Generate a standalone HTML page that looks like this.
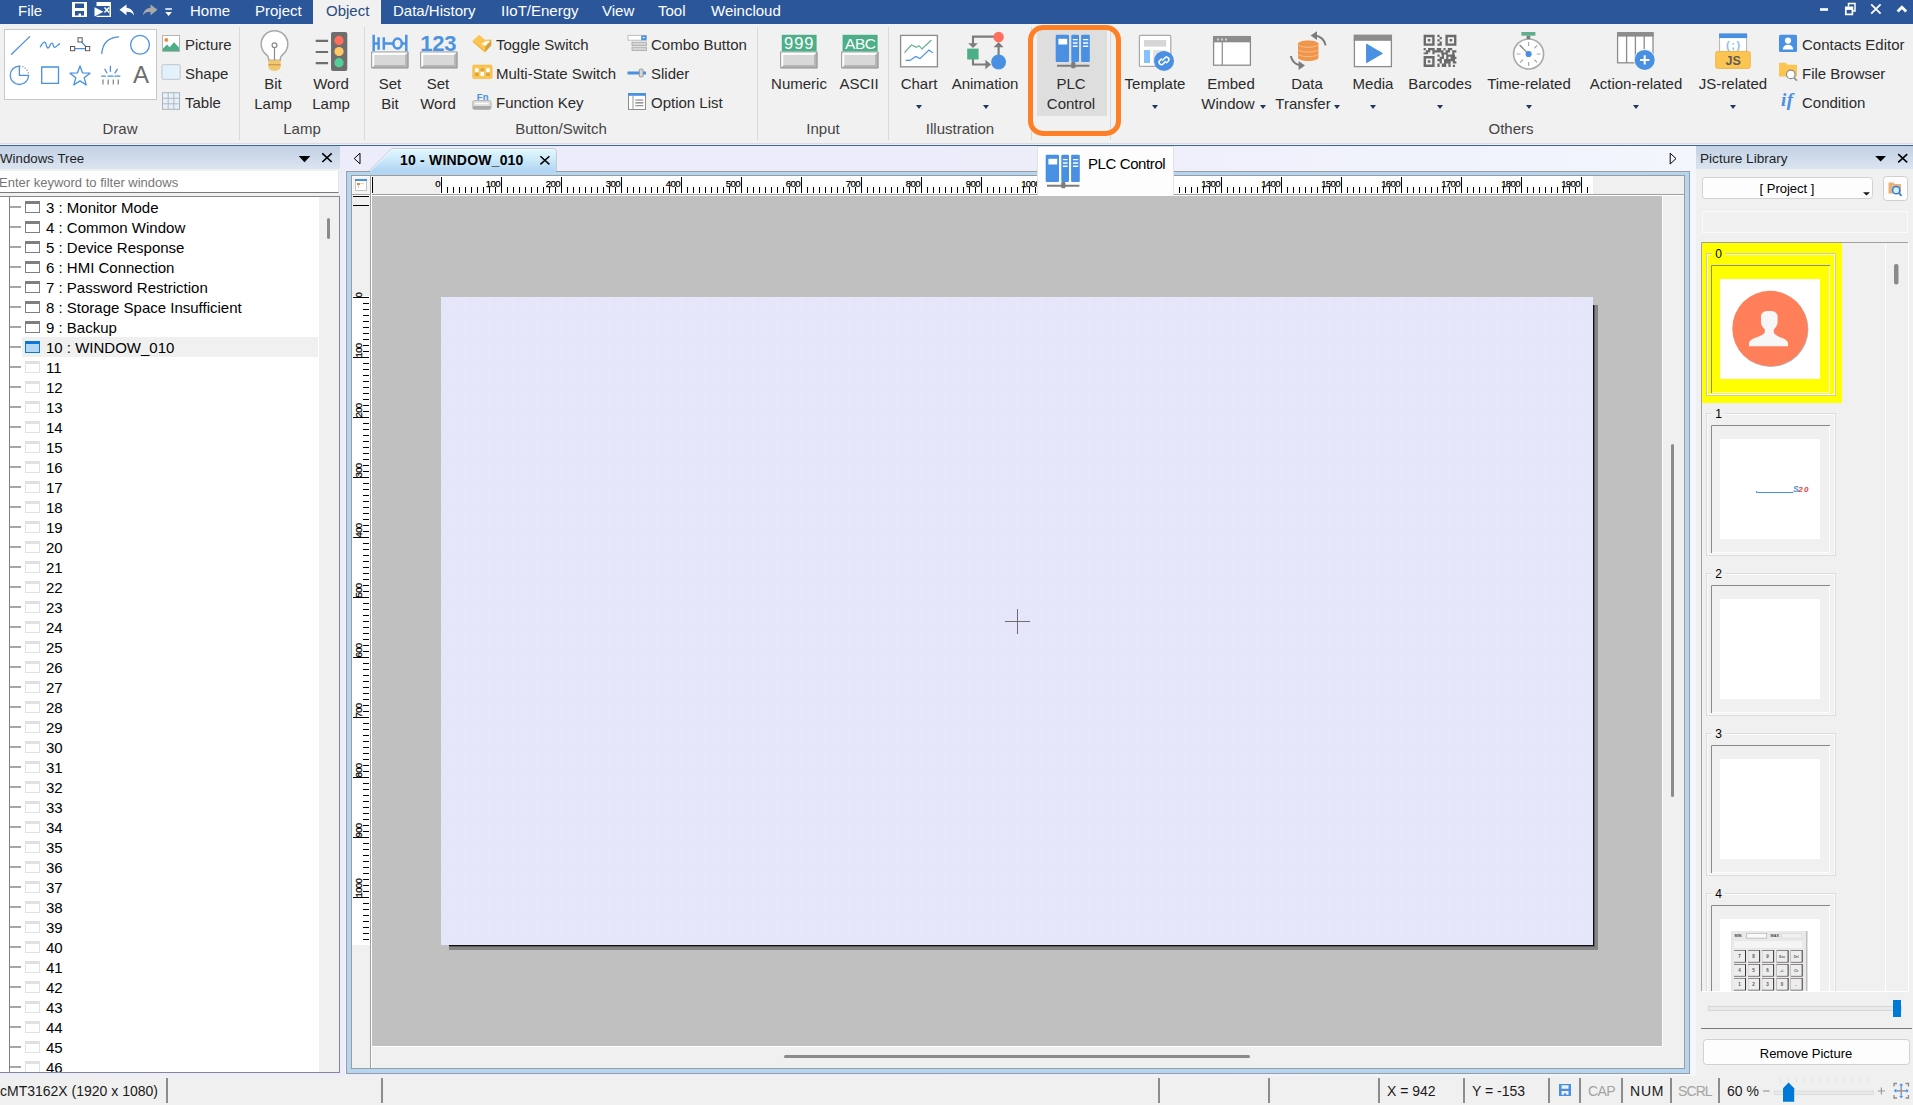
<!DOCTYPE html>
<html lang="en">
<head>
<meta charset="utf-8">
<title>EasyBuilder Pro</title>
<style>
html,body{margin:0;padding:0}
body{width:1913px;height:1105px;overflow:hidden;position:relative;background:#f0f0f0;font-family:"Liberation Sans",sans-serif;font-size:15px;color:#262626;line-height:1}
div,span,svg,i{box-sizing:border-box}
.a{position:absolute}
.t{position:absolute;white-space:pre;line-height:20px;height:20px}
/* menubar */
#menubar{left:0;top:0;width:1913px;height:24px;background:#2b579a}
#menubar .t{color:#fff;top:1px}
#objtab{left:313px;top:0;width:68px;height:24px;background:#f1f1f1}
/* ribbon */
#ribbon{left:0;top:24px;width:1913px;height:120px;background:#f1f1f1}
#ribbon .sep{position:absolute;top:3px;width:1px;height:113px;background:#d9d9d9}
#ribbon .gl{position:absolute;top:95px;height:20px;line-height:20px;color:#444;text-align:center;white-space:pre}
#ribbon .c{position:absolute;text-align:center;white-space:pre;line-height:20px;color:#2b2b2b}
#ribbon .s{position:absolute;white-space:pre;line-height:20px;height:20px;color:#2b2b2b}
.arr{position:absolute;width:0;height:0;border-left:3.5px solid transparent;border-right:3.5px solid transparent;border-top:4px solid #22375c}
#rline1{left:0;top:143px;width:1913px;height:1px;background:#dcdcdc}
#rline2{left:0;top:145px;width:1913px;height:1px;background:#3a64a4}
/* workspace */
#work{left:0;top:146px;width:1913px;height:930px;background:linear-gradient(to right,#ececfa 0,#ececfa 900px,#f3f6fd 1690px)}
.phead{position:absolute;top:0;height:23px;background:linear-gradient(#c1d0e4,#dbe5f1)}
.phead .t{top:3px;color:#1e1e1e}
.tl{position:absolute;left:10px;width:11px;height:2px;background:#a6a6a6}
.wi{position:absolute;left:25px;width:15px;height:12px;border:1px solid #7f7f7f;border-top:3px solid #7f7f7f;background:#fff}
.wa{border-color:#0a78d7;background:#b5d6f4}
.wf{border-color:#e1e1e1}
/* status bar */
#status{left:0;top:1076px;width:1913px;height:29px;background:#f0f0f0}
#status .t{top:5px;font-size:14px;color:#1a1a1a}
#status .vs{position:absolute;top:2px;width:2px;height:25px;background:#8c8c8c}
</style>
</head>
<body>
<!--MENUBAR-->
<div class="a" id="menubar">
<div class="a" id="objtab"></div>
<span class="t" style="left:18px">File</span>
<span class="t" style="left:190px">Home</span>
<span class="t" style="left:255px">Project</span>
<span class="t" style="left:326px;color:#2b4a7d">Object</span>
<span class="t" style="left:393px">Data/History</span>
<span class="t" style="left:501px">IIoT/Energy</span>
<span class="t" style="left:602px">View</span>
<span class="t" style="left:658px">Tool</span>
<span class="t" style="left:711px">Weincloud</span>
<svg class="a" style="left:70px;top:0" width="110" height="24" viewBox="70 0 110 24">
 <!-- save -->
 <path d="M72 2h15v15h-15z M75 3.5h9v4.5h-9z M75 11h9v4.5h-3v-2h-2.5v2h-3.5z" fill="#fff" fill-rule="evenodd"/>
 <!-- save/close -->
 <path d="M96.5 2h14.5v15h-14.5v-1.3h13v-9.7h-13z" fill="#fff"/>
 <path d="M94.5 7.2l9 4.6-9 4.8z" fill="#fff"/>
 <path d="M104.5 7.6l4.6 4.8M109.1 7.6l-4.6 4.8" stroke="#fff" stroke-width="1.5" fill="none"/>
 <!-- undo -->
 <path d="M119.5 9.8l7-5.4v3.3c4 .2 7 3 7.6 7.7-1.8-2.6-4-3.7-7.6-3.6v3.4z" fill="#fff"/>
 <!-- redo -->
 <path d="M157.5 9.8l-7-5.4v3.3c-4 .2-7 3-7.6 7.7 1.8-2.6 4-3.7 7.6-3.6v3.4z" fill="#a9a9a9"/>
 <!-- dropdown -->
 <path d="M165.3 8.3h6.6v1.5h-6.6z M165.3 12h6.6l-3.3 4z" fill="#fff"/>
</svg>
<svg class="a" style="left:1813px;top:0" width="100" height="24" viewBox="1813 0 100 24">
 <path d="M1820 8.2h8v2.6h-8z" fill="#fff"/>
 <path d="M1848.5 6.5v-3h6.5v7.5h-2.5" stroke="#fff" stroke-width="1.5" fill="none"/>
 <path d="M1845.8 7.3h6.6v7h-6.6z" stroke="#fff" stroke-width="1.7" fill="none"/>
 <path d="M1845.8 7.3h6.6v2.6h-6.6z" fill="#fff"/>
 <path d="M1871.2 4.3l9.4 9.4M1880.6 4.3l-9.4 9.4" stroke="#fff" stroke-width="1.8" fill="none"/>
 <path d="M1897.6 11.6l4.3-4.3 4.3 4.3" stroke="#fff" stroke-width="2.8" fill="none"/>
</svg>
</div>
<!--/MENUBAR-->
<!--RIBBON-->
<div class="a" id="ribbon">
<!-- draw gallery box -->
<div class="a" style="left:4px;top:5px;width:153px;height:71px;background:#fff;border:1px solid #c8c8c8"></div>
<span class="s" style="left:133px;top:39px;font-size:24px;line-height:24px;height:24px;color:#6e6e6e">A</span>
<!-- separators -->
<div class="sep" style="left:239px"></div>
<div class="sep" style="left:364px"></div>
<div class="sep" style="left:757px"></div>
<div class="sep" style="left:888px"></div>
<div class="sep" style="left:1031px"></div>
<div class="sep" style="left:1110px"></div>
<!-- PLC highlight -->
<div class="a" style="left:1037px;top:3px;width:70px;height:89px;background:#dedede"></div>
<!-- small items: Draw -->
<span class="s" style="left:185px;top:11px">Picture</span>
<span class="s" style="left:185px;top:40px">Shape</span>
<span class="s" style="left:185px;top:69px">Table</span>
<!-- large items -->
<div class="c" style="left:223px;top:50px;width:100px">Bit
Lamp</div>
<div class="c" style="left:281px;top:50px;width:100px">Word
Lamp</div>
<div class="c" style="left:340px;top:50px;width:100px">Set
Bit</div>
<div class="c" style="left:388px;top:50px;width:100px">Set
Word</div>
<span class="s" style="left:496px;top:11px">Toggle Switch</span>
<span class="s" style="left:496px;top:40px">Multi-State Switch</span>
<span class="s" style="left:496px;top:69px">Function Key</span>
<span class="s" style="left:651px;top:11px">Combo Button</span>
<span class="s" style="left:651px;top:40px">Slider</span>
<span class="s" style="left:651px;top:69px">Option List</span>
<div class="c" style="left:749px;top:50px;width:100px">Numeric</div>
<div class="c" style="left:809px;top:50px;width:100px">ASCII</div>
<div class="c" style="left:869px;top:50px;width:100px">Chart</div>
<div class="c" style="left:935px;top:50px;width:100px">Animation</div>
<div class="c" style="left:1021px;top:50px;width:100px">PLC
Control</div>
<div class="c" style="left:1105px;top:50px;width:100px">Template</div>
<div class="c" style="left:1181px;top:50px;width:100px">Embed</div>
<div class="c" style="left:1178px;top:70px;width:100px">Window</div>
<div class="c" style="left:1257px;top:50px;width:100px">Data</div>
<div class="c" style="left:1253px;top:70px;width:100px">Transfer</div>
<div class="c" style="left:1323px;top:50px;width:100px">Media</div>
<div class="c" style="left:1390px;top:50px;width:100px">Barcodes</div>
<div class="c" style="left:1479px;top:50px;width:100px">Time-related</div>
<div class="c" style="left:1586px;top:50px;width:100px">Action-related</div>
<div class="c" style="left:1683px;top:50px;width:100px">JS-related</div>
<span class="s" style="left:1802px;top:11px">Contacts Editor</span>
<span class="s" style="left:1802px;top:40px">File Browser</span>
<span class="s" style="left:1802px;top:69px">Condition</span>
<span class="s" style="left:1781px;top:64px;font:italic 700 19px/24px 'Liberation Serif',serif;height:24px;color:#4a90e2;letter-spacing:.5px">if</span>
<!-- dropdown arrows -->
<i class="arr" style="left:916px;top:81px"></i>
<i class="arr" style="left:983px;top:81px"></i>
<i class="arr" style="left:1152px;top:81px"></i>
<i class="arr" style="left:1260px;top:81px"></i>
<i class="arr" style="left:1334px;top:81px"></i>
<i class="arr" style="left:1370px;top:81px"></i>
<i class="arr" style="left:1437px;top:81px"></i>
<i class="arr" style="left:1526px;top:81px"></i>
<i class="arr" style="left:1633px;top:81px"></i>
<i class="arr" style="left:1730px;top:81px"></i>
<!-- group labels -->
<div class="gl" style="left:70px;width:100px">Draw</div>
<div class="gl" style="left:252px;width:100px">Lamp</div>
<div class="gl" style="left:511px;width:100px">Button/Switch</div>
<div class="gl" style="left:773px;width:100px">Input</div>
<div class="gl" style="left:910px;width:100px">Illustration</div>
<div class="gl" style="left:1461px;width:100px">Others</div>
<svg class="a" style="left:0;top:0" width="1913" height="120" viewBox="0 24 1913 120" fill="none" font-family="Liberation Sans, sans-serif">
<g stroke="#4a90e2" stroke-width="1.3" stroke-linecap="round" stroke-linejoin="round">
 <path d="M11.5 54.3L29.7 36.6"/>
 <path d="M40.3 46.8C42 44 43.6 41.6 45 42.3 46.6 43 46 48 48 48 50 48 50 42.8 52 43.2 53.6 43.5 53 47.5 54.8 47.3 56.5 47 58 44.5 59.5 43.8"/>
 <path d="M72.5 48.7H87.5M80 40L87.5 48.7"/>
 <path d="M101.8 53.5C102.5 44 108 37.5 118.6 36.8"/>
 <circle cx="140" cy="44.8" r="9.4"/>
 <path d="M19.4 66.1A9.2 9.2 0 1 0 28.6 75.3H19.4Z"/>
 <rect x="41.7" y="67" width="16.8" height="16.4"/>
 <path d="M80 65.9L82.6 72.9 90 73.2 84.2 77.8 86.2 85 80 80.9 73.8 85 75.8 77.8 70 73.2 77.4 72.9Z"/>
 <path d="M110.4 66.5V71.3M104.8 69.3L106.8 72.8M117.3 69.3L115 72.8M101.8 76.2H105.4M108 76.2H113M115 76.2H119.8"/>
</g>
<path d="M19.4 66.1A9.2 9.2 0 0 1 28.6 75.3" stroke="#8a8a8a" stroke-width="1.2" stroke-dasharray="1.2 1.6"/>
<g fill="#fff" stroke="#5a5a5a" stroke-width="1"><rect x="70.5" y="46.5" width="4.2" height="4.2"/><rect x="78" y="37.8" width="4.2" height="4.2"/><rect x="85.5" y="46.5" width="4.2" height="4.2"/></g>
<path d="M103 79.5V84.6M108.2 79.5V84.6M113.3 79.5V84.6M118.3 79.5V84.6" stroke="#8a8a8a" stroke-width="1.3"/>
<!-- picture / shape / table -->
<rect x="162.5" y="35.5" width="17" height="16" fill="#fff" stroke="#b4b4b4"/>
<path d="M163 51V48.6L167 44.6 169.6 47.2 174 42.2 179 47.6V51Z" fill="#4caf87"/>
<circle cx="166.3" cy="39.9" r="1.9" fill="#f0883a"/>
<rect x="162" y="64.7" width="18.2" height="14.6" rx="1" fill="#e3f1fd" stroke="#c0c6cc"/>
<rect x="162.5" y="92.7" width="17" height="16.6" fill="#e3f1fd" stroke="#b2b2b2"/>
<path d="M168.2 93V109M173.8 93V109M163 98.3H179M163 103.8H179" stroke="#b2b2b2" stroke-width=".9"/>
<!-- bit lamp -->
<path d="M268.600 60.300V58.500C268.600 56 266.800 55 265 53.400A13.300 13.300 0 1 1 284 53.400C282.200 55 280.400 56 280.400 58.500V60.300Z" fill="#fff" stroke="#a8a8a8" stroke-width="1.500"/>
<circle cx="274.5" cy="45.3" r="2.4" stroke="#8a8a8a" stroke-width="1.2"/>
<path d="M274.5 47.8V60" stroke="#8a8a8a" stroke-width="1.2"/>
<path d="M268.3 60.3H280.7V66.2C280.7 68.8 278 70.9 274.5 70.9S268.3 68.8 268.3 66.2Z" fill="#f2c76e"/>
<path d="M268.300 64.800H280.700" stroke="#b98f3f" stroke-width="1"/>
<!-- word lamp -->
<rect x="331" y="32" width="16.3" height="39" rx="2" fill="#6e6e6e"/>
<circle cx="339" cy="40.4" r="4.6" fill="#ff6f5b"/><circle cx="339" cy="51.5" r="4.6" fill="#ffc864"/><circle cx="339" cy="62.7" r="4.6" fill="#52cf9b"/>
<path d="M315.7 40.9H328.1M315.7 52H328.1M315.7 63.1H328.1" stroke="#6e6e6e" stroke-width="2.2"/>
<!-- set bit -->
<g id="btn3d"><rect x="0" y="0" width="37.400" height="17.100" rx=".800" fill="#8f8f8f"/><rect x="1" y="1" width="35.400" height="15.100" fill="#b4b4b4"/><path d="M1 1H36.400L33.900 3.500H3.500V13.600L1 16.100Z" fill="#fdfdfd"/><rect x="3.500" y="3.500" width="30.400" height="10.100" fill="#d8d8d8"/></g>
<use href="#btn3d" x="371.2" y="51.4"/>
<g stroke="#4a93e2" stroke-width="2.500"><path d="M373.700 34.800V51.200M378.600 37.300V49.700M373.700 43.400H378.600M383.800 37.300V49.700M383.800 43.400H393.400M402 43.400H406.300M406.300 34.800V51.200" stroke-width="2.500"/><ellipse cx="397.600" cy="43.500" rx="4.200" ry="5"/></g>
<!-- set word -->
<use href="#btn3d" x="420.2" y="51.4"/>
<text x="420.300" y="50.800" font-size="22" font-weight="700" fill="#4a93e2" letter-spacing="-.300">123</text>
<!-- toggle switch -->
<path d="M472.900 40.600L479.200 34.700 484.900 39.700 491.200 39.500V45.600L484.700 52.400 472.900 42.200Z" fill="#fcc450"/>
<path d="M485.600 46.200L491.200 39.600V45.600L484.700 52.400Z" fill="#d7a03f"/>
<path d="M472.900 41.400L484.700 51.300" stroke="#e6ae42" stroke-width=".800"/>
<path d="M481.200 44L486 40.900 490.300 41.200 485.300 45.900Z" fill="#fffbea"/>
<!-- multi-state -->
<rect x="472.700" y="65.100" width="19.400" height="13.500" rx="1.300" fill="#fcc450" stroke="#f2b93f" stroke-width=".600"/>
<path d="M475 68.200h3.500v4.300h-3.500zM486.200 68.200h3.600v4.300h-3.600zM480.500 71.400h3.600v4.500h-3.600z" fill="#fff"/>
<path d="M475 72.500h3.500v3.400h-3.500zM486.200 72.500h3.600v3.400h-3.600zM480.500 68.200h3.600v3.200h-3.600z" fill="#d9a441"/>
<!-- function key -->
<text x="476.800" y="99.700" font-size="9.600" font-weight="700" fill="#4a90e2">Fn</text>
<rect x="472.800" y="100.600" width="18.200" height="8.800" rx="1.600" fill="#dedede" stroke="#a4a4a4" stroke-width=".800"/>
<path d="M473.200 106h17.400v2.200c0 .5-.4.900-.9.900h-15.600c-.5 0-.9-.4-.9-.9z" fill="#a9a9a9"/>
<rect x="475" y="102.900" width="13.400" height="1.300" fill="#fff"/>
<!-- combo button -->
<rect x="628" y="35.4" width="18.4" height="4.8" fill="#fff" stroke="#b8b8b8" stroke-width=".9"/>
<rect x="641.2" y="35.4" width="5.2" height="4.8" fill="#4a90e2"/>
<path d="M642.4 37l1.4 1.6 1.4-1.6z" fill="#fff"/>
<rect x="632" y="42.2" width="14.4" height="3.4" fill="#d4d4d4" stroke="#a9a9a9" stroke-width=".8"/>
<rect x="632" y="47.2" width="14.4" height="3.4" fill="#d4d4d4" stroke="#a9a9a9" stroke-width=".8"/>
<!-- slider -->
<path d="M627.5 73H646" stroke="#4a90e2" stroke-width="3"/>
<rect x="639.3" y="69.2" width="3.8" height="7.6" rx=".8" fill="#d8d8d8" stroke="#8f8f8f" stroke-width=".9"/>
<!-- option list -->
<rect x="628.5" y="93.5" width="17" height="16" fill="#fff" stroke="#8c8c8c"/>
<rect x="628" y="93" width="18" height="2.8" fill="#4a90e2"/>
<path d="M633 96V109.5" stroke="#8c8c8c" stroke-width=".9"/>
<path d="M635.3 100H643.3M635.3 102.9H643.3M635.3 105.8H643.3" stroke="#7a7a7a" stroke-width="1.1"/>
<!-- numeric -->
<use href="#btn3d" x="780.2" y="51.4"/>
<rect x="781.8" y="34.8" width="34.8" height="16.6" fill="#4caf87"/>
<text x="799.2" y="49.4" font-size="16.5" fill="#fff" text-anchor="middle" letter-spacing=".9">999</text>
<!-- ascii -->
<use href="#btn3d" x="841.2" y="51.4"/>
<rect x="842.6" y="34.8" width="35" height="16.6" fill="#4caf87"/>
<text x="860.3" y="48.7" font-size="15.5" fill="#fff" text-anchor="middle" letter-spacing="-.4">ABC</text>
<!-- chart -->
<rect x="900.6" y="35.4" width="36.8" height="31.4" fill="#fff" stroke="#8c8c8c" stroke-width="1.3"/>
<path d="M904.5 52.6L911.4 45 916.4 47.4 918.9 45.7 922 49 931.4 40" stroke="#5faf8f" stroke-width="1.2"/>
<path d="M905.7 60.4H910L915.8 56.4 920 58.6 929 50 932.7 52.9" stroke="#4a90e2" stroke-width="1.2"/>
<!-- animation -->
<g stroke="#7c7c7c" stroke-width="2.1"><path d="M994 36.6H973V44M973 59V64.5H986M998.6 55V46.5"/></g>
<path d="M968.2 43.2H977.8L973 48zM985.4 59.8V69.2L991 64.5zM993.6 47.2H1003.6L998.6 42z" fill="#7c7c7c"/>
<rect x="967.2" y="48.6" width="11.4" height="10.9" fill="#4caf87"/>
<circle cx="998.6" cy="37" r="5.2" fill="#ff6f5b"/><circle cx="998.6" cy="62" r="7.5" fill="#4a90e2"/>
<!-- PLC -->
<g fill="#4a90e2"><rect x="1055.7" y="34.8" width="13.3" height="27.2" rx="1.2"/><rect x="1071.3" y="34.8" width="7.7" height="27.2" rx="1.2"/><rect x="1081.1" y="34.8" width="8.7" height="27.2" rx="1.2"/></g>
<rect x="1058.4" y="38.8" width="8.8" height="5.7" fill="#fff"/>
<path d="M1072.9 39.6H1077.6M1072.9 43H1077.6M1072.9 46.2H1077.6M1083 39.6H1088.2M1083 43H1088.2M1083 46.2H1088.2" stroke="#fff" stroke-width="1.4"/>
<path d="M1057 65.8H1089.4" stroke="#7c7c7c" stroke-width="2"/><rect x="1071.2" y="62" width="4.2" height="6.2" rx="1" fill="#7c7c7c"/>
<!-- template -->
<rect x="1139.4" y="35.4" width="31.4" height="31" rx="1" fill="#fff" stroke="#a9a9a9" stroke-width="1.2"/>
<rect x="1144" y="40" width="22.2" height="6.6" fill="#d6d6d6"/>
<rect x="1144" y="50" width="6" height="13" fill="#85c1ff"/>
<rect x="1153" y="50" width="13" height="13" fill="#e2e2e2"/>
<circle cx="1164" cy="60.9" r="10" fill="#4a90e2"/>
<g stroke="#fff" stroke-width="1.5" stroke-linecap="round"><path d="M1162.6 60.2l2.3-2.3a2.3 2.3 0 0 1 3.3 3.3l-1.6 1.6M1165.4 61.6l-2.3 2.3a2.3 2.3 0 0 1-3.3-3.3l1.6-1.6"/></g>
<!-- embed window -->
<rect x="1213.6" y="36.6" width="36.8" height="28.6" fill="#fff" stroke="#8c8c8c" stroke-width="1.3"/>
<rect x="1213" y="36" width="38" height="6.3" fill="#8c8c8c"/>
<path d="M1217 38.4h2v2h-2zM1221 38.4h2v2h-2zM1225 38.4h2v2h-2z" fill="#d0d0d0"/>
<path d="M1222.3 42V65" stroke="#8c8c8c" stroke-width="1.2"/>
<!-- data transfer -->
<path d="M1298 43.6V57.8C1298 59.6 1302.5 61 1308.2 61S1318.4 59.6 1318.4 57.8V43.6C1318.4 41.8 1313.9 40.4 1308.2 40.4S1298 41.8 1298 43.6Z" fill="#f0964a"/>
<path d="M1298 44.2C1298 46 1302.5 47.2 1308.2 47.2S1318.4 46 1318.4 44.2M1298 49C1298 50.8 1302.5 52 1308.2 52S1318.4 50.8 1318.4 49M1298 53.6C1298 55.4 1302.5 56.6 1308.2 56.6S1318.4 55.4 1318.4 53.6" stroke="#f7c29a" stroke-width=".9"/>
<path d="M1315 35.6C1320.5 36.5 1324.5 40 1325.6 45.4M1290.8 56C1292 61.2 1295.6 64.6 1300.6 65.6" stroke="#7c7c7c" stroke-width="2"/>
<path d="M1317 31.2V40L1310.6 35.6zM1298.6 61V70L1305 65.6z" fill="#7c7c7c"/>
<!-- media -->
<rect x="1354.4" y="35.4" width="37" height="31.2" fill="#fff" stroke="#8c8c8c" stroke-width="1.3"/>
<rect x="1353.8" y="34.8" width="38.2" height="6" fill="#8c8c8c"/>
<path d="M1366.6 44.2V62.6L1382.4 53.4Z" fill="#4a90e2" stroke="#4a90e2" stroke-width="1" stroke-linejoin="round"/>
<!-- barcodes -->
<g fill="#6a6a6a">
<path d="M1423.6 34.8h11v11h-11zM1426 37.2v6.2h6.2v-6.2zM1427.8 39h2.6v2.6h-2.6z" fill-rule="evenodd"/>
<path d="M1445.4 34.8h11v11h-11zM1447.8 37.2v6.2h6.2v-6.2zM1449.6 39h2.6v2.6h-2.6z" fill-rule="evenodd"/>
<path d="M1423.6 56h11v11h-11zM1426 58.400v6.2h6.2v-6.2zM1427.8 60.2h2.6v2.6h-2.6z" fill-rule="evenodd"/>
<path d="M1437.400 34.800h2.200v2.200h-2.200zM1439.600 37.000h2.200v2.200h-2.200zM1437.400 39.200h2.200v2.200h-2.200zM1439.600 41.400h2.200v2.200h-2.200zM1437.400 43.600h4.400v2.200h-4.400zM1423.600 48.000h2.200v2.200h-2.200zM1428.000 48.000h6.600v2.200h-6.600zM1425.800 50.200h4.400v2.200h-4.400zM1432.400 50.200h11.000v2.200h-11.000zM1436.800 48.000h4.400v2.200h-4.400zM1443.400 48.000h2.200v2.200h-2.200zM1447.800 48.000h4.400v2.200h-4.400zM1445.600 50.200h4.400v2.200h-4.400zM1452.200 50.200h4.200v2.200h-4.200zM1423.600 52.400h4.400v1.800h-4.400zM1432.400 52.400h2.200v1.800h-2.200zM1441.200 52.400h6.600v2.200h-6.600zM1452.200 52.400h2.200v2.200h-2.200zM1437.400 54.600h2.200v2.200h-2.200zM1441.800 54.600h2.200v2.200h-2.200zM1446.200 54.600h8.800v2.200h-8.800zM1439.600 56.800h4.400v2.200h-4.400zM1446.200 56.800h2.200v2.200h-2.200zM1450.600 56.800h5.800v2.200h-5.800zM1437.400 59.000h4.400v2.200h-4.400zM1444.000 59.000h11.000v2.200h-11.000zM1439.600 61.200h2.200v2.200h-2.200zM1444.000 61.200h6.600v2.200h-6.600zM1452.800 61.200h3.600v2.200h-3.600zM1437.400 63.400h2.200v3.600h-2.200zM1441.800 63.400h4.400v3.600h-4.400zM1448.400 63.400h2.200v3.600h-2.200zM1452.800 64.800h2.200v2.200h-2.200z"/>
</g>
<!-- time-related -->
<circle cx="1528.6" cy="54" r="15" fill="#fff" stroke="#a9a9a9" stroke-width="1.6"/>
<rect x="1521.4" y="32" width="14" height="3.7" fill="#5faf8f"/>
<rect x="1526.6" y="35.7" width="3.6" height="3.4" fill="#7c7c7c"/>
<g stroke="#a9a9a9" stroke-width="1.2"><path d="M1528.6 42V46M1528.600 62V66M1516.600 54H1520.600M1536.600 54H1540.600M1520.1 45.500L1522.900 48.300M1537.100 45.500L1534.300 48.300M1520.100 62.500L1522.900 59.700M1537.100 62.500L1534.300 59.700"/></g>
<path d="M1528.6 54L1519.600 45" stroke="#8c8c8c" stroke-width="1.3"/>
<circle cx="1528.6" cy="54" r="3.1" fill="#4a90e2"/>
<!-- action-related -->
<rect x="1617.600" y="32.800" width="35.400" height="30" fill="#fff" stroke="#8c8c8c" stroke-width="1.3"/>
<rect x="1617" y="32.200" width="36.600" height="4.400" fill="#8c8c8c"/>
<path d="M1626.600 36V63M1635.400 36V63M1644.200 36V50" stroke="#8c8c8c" stroke-width="1.300"/>
<circle cx="1644.700" cy="59.900" r="10.800" fill="#f1f1f1"/>
<circle cx="1644.700" cy="59.900" r="10" fill="#4a90e2"/>
<path d="M1644.700 55.200V64.600M1640 59.900H1649.400" stroke="#fff" stroke-width="2"/>
<!-- JS-related -->
<rect x="1719.600" y="34" width="27" height="18" fill="#fff" stroke="#b4b4b4" stroke-width="1"/>
<rect x="1719.100" y="33.500" width="28" height="4.600" fill="#4a90e2"/>
<text x="1734" y="49.200" font-size="11" font-weight="700" fill="#8dbdf0" text-anchor="middle" letter-spacing="1.6">(;)</text>
<rect x="1715.600" y="51.400" width="34.700" height="17" rx="2" fill="#fcc450" stroke="#e8b040" stroke-width=".8"/>
<text x="1733.2" y="64.600" font-size="12.500" font-weight="700" fill="#5c5c5c" text-anchor="middle">JS</text>
<!-- contacts editor -->
<rect x="1779" y="34.800" width="18" height="17.200" rx="1.500" fill="#4a90e2"/>
<circle cx="1788" cy="40.600" r="3.100" fill="#fff"/>
<path d="M1782.800 49.600C1782.800 46.400 1785 44.800 1788 44.800S1793.200 46.400 1793.200 49.600Z" fill="#fff"/>
<!-- file browser -->
<path d="M1779 63.800C1779 63.200 1779.400 62.800 1780 62.800H1785.600L1787.400 64.800H1796C1796.600 64.800 1797 65.200 1797 65.800V76.600H1779Z" fill="#fcc450"/>
<circle cx="1790.800" cy="74.400" r="4.300" fill="#fff" stroke="#8c8c8c" stroke-width="1.200"/>
<path d="M1793.900 77.600L1797 80.600" stroke="#8c8c8c" stroke-width="1.600"/>

</svg>

<!-- orange highlight -->
<div class="a" style="left:1028px;top:1px;width:93px;height:111px;border:5px solid #ff7f27;border-radius:15px"></div>
</div>
<!--/RIBBON-->
<div class="a" id="rline1"></div><div class="a" id="rline2"></div>
<div class="a" id="work">
<!--LEFT-->
<div class="a" id="left" style="left:0;top:0;width:340px;height:930px">
<div class="phead" style="left:0;width:340px"><span class="t" style="left:0;font-size:13.300px">Windows Tree</span>
<svg class="a" style="left:296px;top:5px" width="40" height="14" viewBox="296 151 40 14"><path d="M298.7 156h11.6l-5.800 6.200z" fill="#000"/><path d="M322.300 153.300l9.400 8.700M331.700 153.300l-9.400 8.700" stroke="#000" stroke-width="1.600"/></svg></div>
<div class="a" style="left:0;top:23px;width:340px;height:27px;background:#f0f0f0"></div>
<div class="a" style="left:0;top:25px;width:339px;height:22px;background:#fff;border-bottom:1px solid #7a7a7a;border-right:1px solid #e3e3e3"></div>
<span class="t" style="left:-1px;top:27px;font-size:13px;color:#767676">Enter keyword to filter windows</span>
<div class="a" id="tree" style="left:0;top:50px;width:340px;height:877px;background:#fff;border-top:1px solid #828790;border-right:1px solid #828790;border-bottom:1px solid #828790;overflow:hidden">
<div class="a" style="left:319px;top:0;width:20px;height:875px;background:#f0f0f0"></div>
<div class="a" style="left:327px;top:21px;width:3px;height:21px;background:#8b8b8b;border-radius:1.5px"></div>
<div class="a" style="left:9px;top:0;width:1px;height:875px;background:#808080"></div>
<div class="a" style="left:22px;top:140px;width:296px;height:20px;background:#f0f0f0"></div>
<i class="tl" style="top:9px"></i>
<i class="wi" style="top:4px"></i>
<span class="t" style="left:46px;top:1px;color:#000">3 : Monitor Mode</span>
<i class="tl" style="top:29px"></i>
<i class="wi" style="top:24px"></i>
<span class="t" style="left:46px;top:21px;color:#000">4 : Common Window</span>
<i class="tl" style="top:49px"></i>
<i class="wi" style="top:44px"></i>
<span class="t" style="left:46px;top:41px;color:#000">5 : Device Response</span>
<i class="tl" style="top:69px"></i>
<i class="wi" style="top:64px"></i>
<span class="t" style="left:46px;top:61px;color:#000">6 : HMI Connection</span>
<i class="tl" style="top:89px"></i>
<i class="wi" style="top:84px"></i>
<span class="t" style="left:46px;top:81px;color:#000">7 : Password Restriction</span>
<i class="tl" style="top:109px"></i>
<i class="wi" style="top:104px"></i>
<span class="t" style="left:46px;top:101px;color:#000">8 : Storage Space Insufficient</span>
<i class="tl" style="top:129px"></i>
<i class="wi" style="top:124px"></i>
<span class="t" style="left:46px;top:121px;color:#000">9 : Backup</span>
<i class="tl" style="top:149px"></i>
<i class="wi wa" style="top:144px"></i>
<span class="t" style="left:46px;top:141px;color:#000">10 : WINDOW_010</span>
<i class="tl" style="top:169px"></i>
<i class="wi wf" style="top:164px"></i>
<span class="t" style="left:46px;top:161px;color:#000">11</span>
<i class="tl" style="top:189px"></i>
<i class="wi wf" style="top:184px"></i>
<span class="t" style="left:46px;top:181px;color:#000">12</span>
<i class="tl" style="top:209px"></i>
<i class="wi wf" style="top:204px"></i>
<span class="t" style="left:46px;top:201px;color:#000">13</span>
<i class="tl" style="top:229px"></i>
<i class="wi wf" style="top:224px"></i>
<span class="t" style="left:46px;top:221px;color:#000">14</span>
<i class="tl" style="top:249px"></i>
<i class="wi wf" style="top:244px"></i>
<span class="t" style="left:46px;top:241px;color:#000">15</span>
<i class="tl" style="top:269px"></i>
<i class="wi wf" style="top:264px"></i>
<span class="t" style="left:46px;top:261px;color:#000">16</span>
<i class="tl" style="top:289px"></i>
<i class="wi wf" style="top:284px"></i>
<span class="t" style="left:46px;top:281px;color:#000">17</span>
<i class="tl" style="top:309px"></i>
<i class="wi wf" style="top:304px"></i>
<span class="t" style="left:46px;top:301px;color:#000">18</span>
<i class="tl" style="top:329px"></i>
<i class="wi wf" style="top:324px"></i>
<span class="t" style="left:46px;top:321px;color:#000">19</span>
<i class="tl" style="top:349px"></i>
<i class="wi wf" style="top:344px"></i>
<span class="t" style="left:46px;top:341px;color:#000">20</span>
<i class="tl" style="top:369px"></i>
<i class="wi wf" style="top:364px"></i>
<span class="t" style="left:46px;top:361px;color:#000">21</span>
<i class="tl" style="top:389px"></i>
<i class="wi wf" style="top:384px"></i>
<span class="t" style="left:46px;top:381px;color:#000">22</span>
<i class="tl" style="top:409px"></i>
<i class="wi wf" style="top:404px"></i>
<span class="t" style="left:46px;top:401px;color:#000">23</span>
<i class="tl" style="top:429px"></i>
<i class="wi wf" style="top:424px"></i>
<span class="t" style="left:46px;top:421px;color:#000">24</span>
<i class="tl" style="top:449px"></i>
<i class="wi wf" style="top:444px"></i>
<span class="t" style="left:46px;top:441px;color:#000">25</span>
<i class="tl" style="top:469px"></i>
<i class="wi wf" style="top:464px"></i>
<span class="t" style="left:46px;top:461px;color:#000">26</span>
<i class="tl" style="top:489px"></i>
<i class="wi wf" style="top:484px"></i>
<span class="t" style="left:46px;top:481px;color:#000">27</span>
<i class="tl" style="top:509px"></i>
<i class="wi wf" style="top:504px"></i>
<span class="t" style="left:46px;top:501px;color:#000">28</span>
<i class="tl" style="top:529px"></i>
<i class="wi wf" style="top:524px"></i>
<span class="t" style="left:46px;top:521px;color:#000">29</span>
<i class="tl" style="top:549px"></i>
<i class="wi wf" style="top:544px"></i>
<span class="t" style="left:46px;top:541px;color:#000">30</span>
<i class="tl" style="top:569px"></i>
<i class="wi wf" style="top:564px"></i>
<span class="t" style="left:46px;top:561px;color:#000">31</span>
<i class="tl" style="top:589px"></i>
<i class="wi wf" style="top:584px"></i>
<span class="t" style="left:46px;top:581px;color:#000">32</span>
<i class="tl" style="top:609px"></i>
<i class="wi wf" style="top:604px"></i>
<span class="t" style="left:46px;top:601px;color:#000">33</span>
<i class="tl" style="top:629px"></i>
<i class="wi wf" style="top:624px"></i>
<span class="t" style="left:46px;top:621px;color:#000">34</span>
<i class="tl" style="top:649px"></i>
<i class="wi wf" style="top:644px"></i>
<span class="t" style="left:46px;top:641px;color:#000">35</span>
<i class="tl" style="top:669px"></i>
<i class="wi wf" style="top:664px"></i>
<span class="t" style="left:46px;top:661px;color:#000">36</span>
<i class="tl" style="top:689px"></i>
<i class="wi wf" style="top:684px"></i>
<span class="t" style="left:46px;top:681px;color:#000">37</span>
<i class="tl" style="top:709px"></i>
<i class="wi wf" style="top:704px"></i>
<span class="t" style="left:46px;top:701px;color:#000">38</span>
<i class="tl" style="top:729px"></i>
<i class="wi wf" style="top:724px"></i>
<span class="t" style="left:46px;top:721px;color:#000">39</span>
<i class="tl" style="top:749px"></i>
<i class="wi wf" style="top:744px"></i>
<span class="t" style="left:46px;top:741px;color:#000">40</span>
<i class="tl" style="top:769px"></i>
<i class="wi wf" style="top:764px"></i>
<span class="t" style="left:46px;top:761px;color:#000">41</span>
<i class="tl" style="top:789px"></i>
<i class="wi wf" style="top:784px"></i>
<span class="t" style="left:46px;top:781px;color:#000">42</span>
<i class="tl" style="top:809px"></i>
<i class="wi wf" style="top:804px"></i>
<span class="t" style="left:46px;top:801px;color:#000">43</span>
<i class="tl" style="top:829px"></i>
<i class="wi wf" style="top:824px"></i>
<span class="t" style="left:46px;top:821px;color:#000">44</span>
<i class="tl" style="top:849px"></i>
<i class="wi wf" style="top:844px"></i>
<span class="t" style="left:46px;top:841px;color:#000">45</span>
<i class="tl" style="top:869px"></i>
<i class="wi wf" style="top:864px"></i>
<span class="t" style="left:46px;top:861px;color:#000">46</span>
</div>
</div>
<!--/LEFT-->
<!--CENTER-->
<svg class="a" style="left:340px;top:0" width="1356" height="26" viewBox="340 146 1356 26" fill="none">
<defs><linearGradient id="tabg" x1="0" y1="0" x2="0" y2="1"><stop offset="0" stop-color="#e2f8fe"/><stop offset=".45" stop-color="#cdeafa"/><stop offset="1" stop-color="#afd3f2"/></linearGradient></defs>
<path d="M368 172L390.600 149.800Q392 148.500 394 148.500H553.500Q556.500 148.500 556.500 151.500V172Z" fill="url(#tabg)" stroke="#c2cad4" stroke-width="1"/>
<path d="M369.600 171.500L391.400 150.300Q392.400 149.500 394 149.500H553" stroke="#f2fbff" stroke-width="1"/>
<path d="M360 153.200L354.200 158.500 360 163.800Z" stroke="#000" stroke-width="1"/>
<path d="M1670.200 153.200L1676 158.600 1670.200 164Z" stroke="#000" stroke-width="1"/>
<path d="M540.400 156.200L549.400 164.400M549.400 156.200L540.400 164.400" stroke="#000" stroke-width="1.500"/>
</svg>
<span class="t" style="left:400px;top:4px;font-size:14px;font-weight:700;color:#000;letter-spacing:.2px">10 - WINDOW_010</span>
<div class="a" style="left:345px;top:25px;width:1px;height:903px;background:#f6f7fd"></div>
<div class="a" style="left:346px;top:25px;width:1344px;height:903px;background:#b3d7f3;border:1px solid #9c9c9c"></div>
<div class="a" style="left:351px;top:29px;width:1334px;height:894px;background:#f0f0f0;border:1px solid #9c9c9c"></div>
<div class="a" style="left:370px;top:25px;width:186px;height:1px;background:#b1d5f3"></div>
<div class="a" style="left:372px;top:50px;width:1290px;height:850px;background:#c0c0c0"></div>
<div class="a" style="left:1662px;top:50px;width:1px;height:851px;background:#fff"></div>
<div class="a" style="left:372px;top:900px;width:1291px;height:1px;background:#fff"></div>
<div class="a" style="left:1671px;top:298px;width:3px;height:353px;background:#8b8b8b;border-radius:1.5px"></div>
<div class="a" style="left:784px;top:909px;width:466px;height:3px;background:#8b8b8b;border-radius:1.5px"></div>
<div class="a" style="left:440px;top:30px;width:1153px;height:18px;background:#fff"></div>
<div class="a" style="left:352px;top:150px;width:18px;height:649px;background:#fff"></div>
<div class="a" style="left:352px;top:48px;width:1332px;height:1px;background:#a0a0a0"></div>
<div class="a" style="left:352px;top:49px;width:1332px;height:1px;background:#fff"></div>
<div class="a" style="left:370px;top:30px;width:1px;height:892px;background:#a0a0a0"></div>
<div class="a" style="left:371px;top:30px;width:1px;height:892px;background:#fff"></div>
<div class="a" style="left:352px;top:30px;width:18px;height:18px;background:#f4f4f4;border-top:1px solid #fcfcfc;border-left:1px solid #fcfcfc"></div>
<div class="a" style="left:449px;top:159px;width:1149px;height:645px;background:#858585"></div>
<div class="a" style="left:449px;top:159px;width:1146px;height:642px;background:#5c5c5c"></div>
<div class="a" style="left:449px;top:159px;width:1145px;height:641px;background:#101010"></div>
<div class="a" style="left:441px;top:151px;width:1152px;height:648px;background:#e6e6fa"></div>
<svg class="a" style="left:352px;top:30px" width="1332" height="892" viewBox="352 176 1332 892" fill="none" font-family="Liberation Sans, sans-serif" font-size="9.600" shape-rendering="crispEdges">
<defs><pattern id="dots" patternUnits="userSpaceOnUse" x="441" y="297" width="12" height="12"><rect x="0" y="0" width="1" height="1" fill="#fbfbff"/></pattern></defs>
<rect x="441" y="297" width="1152" height="648" fill="url(#dots)"/>
<path d="M372.500 177V193M441.5 177V193M447.5 187V193M453.5 187V193M459.5 187V193M465.5 187V193M471.5 187V193M477.5 187V193M483.5 187V193M489.5 187V193M495.5 187V193M501.5 177V193M507.5 187V193M513.5 187V193M519.5 187V193M525.5 187V193M531.5 187V193M537.5 187V193M543.5 187V193M549.5 187V193M555.5 187V193M561.5 177V193M567.5 187V193M573.5 187V193M579.5 187V193M585.5 187V193M591.5 187V193M597.5 187V193M603.5 187V193M609.5 187V193M615.5 187V193M621.5 177V193M627.5 187V193M633.5 187V193M639.5 187V193M645.5 187V193M651.5 187V193M657.5 187V193M663.5 187V193M669.5 187V193M675.5 187V193M681.5 177V193M687.5 187V193M693.5 187V193M699.5 187V193M705.5 187V193M711.5 187V193M717.5 187V193M723.5 187V193M729.5 187V193M735.5 187V193M741.5 177V193M747.5 187V193M753.5 187V193M759.5 187V193M765.5 187V193M771.5 187V193M777.5 187V193M783.5 187V193M789.5 187V193M795.5 187V193M801.5 177V193M807.5 187V193M813.5 187V193M819.5 187V193M825.5 187V193M831.5 187V193M837.5 187V193M843.5 187V193M849.5 187V193M855.5 187V193M861.5 177V193M867.5 187V193M873.5 187V193M879.5 187V193M885.5 187V193M891.5 187V193M897.5 187V193M903.5 187V193M909.5 187V193M915.5 187V193M921.5 177V193M927.5 187V193M933.5 187V193M939.5 187V193M945.5 187V193M951.5 187V193M957.5 187V193M963.5 187V193M969.5 187V193M975.5 187V193M981.5 177V193M987.5 187V193M993.5 187V193M999.5 187V193M1005.5 187V193M1011.5 187V193M1017.5 187V193M1023.5 187V193M1029.5 187V193M1035.5 187V193M1041.5 177V193M1047.5 187V193M1053.5 187V193M1059.5 187V193M1065.5 187V193M1071.5 187V193M1077.5 187V193M1083.5 187V193M1089.5 187V193M1095.5 187V193M1101.5 177V193M1107.5 187V193M1113.5 187V193M1119.5 187V193M1125.5 187V193M1131.5 187V193M1137.5 187V193M1143.5 187V193M1149.5 187V193M1155.5 187V193M1161.5 177V193M1167.5 187V193M1173.5 187V193M1179.5 187V193M1185.5 187V193M1191.5 187V193M1197.5 187V193M1203.5 187V193M1209.5 187V193M1215.5 187V193M1221.5 177V193M1227.5 187V193M1233.5 187V193M1239.5 187V193M1245.5 187V193M1251.5 187V193M1257.5 187V193M1263.5 187V193M1269.5 187V193M1275.5 187V193M1281.5 177V193M1287.5 187V193M1293.5 187V193M1299.5 187V193M1305.5 187V193M1311.5 187V193M1317.5 187V193M1323.5 187V193M1329.5 187V193M1335.5 187V193M1341.5 177V193M1347.5 187V193M1353.5 187V193M1359.5 187V193M1365.5 187V193M1371.5 187V193M1377.5 187V193M1383.5 187V193M1389.5 187V193M1395.5 187V193M1401.5 177V193M1407.5 187V193M1413.5 187V193M1419.5 187V193M1425.5 187V193M1431.5 187V193M1437.5 187V193M1443.5 187V193M1449.5 187V193M1455.5 187V193M1461.5 177V193M1467.5 187V193M1473.5 187V193M1479.5 187V193M1485.5 187V193M1491.5 187V193M1497.5 187V193M1503.5 187V193M1509.5 187V193M1515.5 187V193M1521.5 177V193M1527.5 187V193M1533.5 187V193M1539.5 187V193M1545.5 187V193M1551.5 187V193M1557.5 187V193M1563.5 187V193M1569.5 187V193M1575.5 187V193M1581.5 177V193M1587.5 187V193" stroke="#000" stroke-width="1"/>
<path d="M353 196.500H369M353 205.500H369M353 297.5H369M363 303.5H369M363 309.5H369M363 315.5H369M363 321.5H369M363 327.5H369M363 333.5H369M363 339.5H369M363 345.5H369M363 351.5H369M353 357.5H369M363 363.5H369M363 369.5H369M363 375.5H369M363 381.5H369M363 387.5H369M363 393.5H369M363 399.5H369M363 405.5H369M363 411.5H369M353 417.5H369M363 423.5H369M363 429.5H369M363 435.5H369M363 441.5H369M363 447.5H369M363 453.5H369M363 459.5H369M363 465.5H369M363 471.5H369M353 477.5H369M363 483.5H369M363 489.5H369M363 495.5H369M363 501.5H369M363 507.5H369M363 513.5H369M363 519.5H369M363 525.5H369M363 531.5H369M353 537.5H369M363 543.5H369M363 549.5H369M363 555.5H369M363 561.5H369M363 567.5H369M363 573.5H369M363 579.5H369M363 585.5H369M363 591.5H369M353 597.5H369M363 603.5H369M363 609.5H369M363 615.5H369M363 621.5H369M363 627.5H369M363 633.5H369M363 639.5H369M363 645.5H369M363 651.5H369M353 657.5H369M363 663.5H369M363 669.5H369M363 675.5H369M363 681.5H369M363 687.5H369M363 693.5H369M363 699.5H369M363 705.5H369M363 711.5H369M353 717.5H369M363 723.5H369M363 729.5H369M363 735.5H369M363 741.5H369M363 747.5H369M363 753.5H369M363 759.5H369M363 765.5H369M363 771.5H369M353 777.5H369M363 783.5H369M363 789.5H369M363 795.5H369M363 801.5H369M363 807.5H369M363 813.5H369M363 819.5H369M363 825.5H369M363 831.5H369M353 837.5H369M363 843.5H369M363 849.5H369M363 855.5H369M363 861.5H369M363 867.5H369M363 873.5H369M363 879.5H369M363 885.5H369M363 891.5H369M353 897.5H369M363 903.5H369M363 909.5H369M363 915.5H369M363 921.5H369M363 927.5H369M363 933.5H369M363 939.5H369" stroke="#000" stroke-width="1"/>
<g fill="#000" stroke="#000" stroke-width=".250" letter-spacing="-.650" shape-rendering="auto">
<text x="439.9" y="187" text-anchor="end">0</text>
<text x="499.9" y="187" text-anchor="end">100</text>
<text x="559.9" y="187" text-anchor="end">200</text>
<text x="619.9" y="187" text-anchor="end">300</text>
<text x="679.9" y="187" text-anchor="end">400</text>
<text x="739.9" y="187" text-anchor="end">500</text>
<text x="799.9" y="187" text-anchor="end">600</text>
<text x="859.9" y="187" text-anchor="end">700</text>
<text x="919.9" y="187" text-anchor="end">800</text>
<text x="979.9" y="187" text-anchor="end">900</text>
<text x="1039.9" y="187" text-anchor="end">1000</text>
<text x="1099.9" y="187" text-anchor="end">1100</text>
<text x="1159.9" y="187" text-anchor="end">1200</text>
<text x="1219.9" y="187" text-anchor="end">1300</text>
<text x="1279.9" y="187" text-anchor="end">1400</text>
<text x="1339.9" y="187" text-anchor="end">1500</text>
<text x="1399.9" y="187" text-anchor="end">1600</text>
<text x="1459.9" y="187" text-anchor="end">1700</text>
<text x="1519.9" y="187" text-anchor="end">1800</text>
<text x="1579.9" y="187" text-anchor="end">1900</text>
<text transform="translate(362 297.5) rotate(-90)">0</text>
<text transform="translate(362 357.5) rotate(-90)">100</text>
<text transform="translate(362 417.5) rotate(-90)">200</text>
<text transform="translate(362 477.5) rotate(-90)">300</text>
<text transform="translate(362 537.5) rotate(-90)">400</text>
<text transform="translate(362 597.5) rotate(-90)">500</text>
<text transform="translate(362 657.5) rotate(-90)">600</text>
<text transform="translate(362 717.5) rotate(-90)">700</text>
<text transform="translate(362 777.5) rotate(-90)">800</text>
<text transform="translate(362 837.5) rotate(-90)">900</text>
<text transform="translate(362 897.5) rotate(-90)">1000</text>
</g>
<path d="M1005 621.500H1030M1017.500 609V634" stroke="#6e6e6e" stroke-width="1"/>
<rect x="355.500" y="179.500" width="11" height="10.500" fill="#fff" stroke="#c4c4c4"/><rect x="355" y="179" width="12" height="2" fill="#4a90e2"/><rect x="357" y="182.500" width="2.500" height="2.500" fill="#f0883a"/><rect x="358" y="185" width="1" height="2.500" fill="#c9c9c9"/><rect x="360" y="183" width="4" height="1" fill="#d9d9d9"/>
</svg>
<div class="a" style="left:1037px;top:0;width:137px;height:50px;background:#fdfdfd;border:1px solid #e2e2e2;border-bottom:0"></div>
<svg class="a" style="left:1044px;top:7px" width="38" height="36" viewBox="1054 33 38 36" fill="none">
<g fill="#4a90e2"><rect x="1055.700" y="34.800" width="13.300" height="27.200" rx="1.200"/><rect x="1071.300" y="34.800" width="7.700" height="27.200" rx="1.200"/><rect x="1081.100" y="34.800" width="8.700" height="27.200" rx="1.200"/></g><rect x="1058.400" y="38.800" width="8.800" height="5.700" fill="#fff"/><path d="M1072.900 39.600H1077.600M1072.900 43H1077.600M1072.900 46.200H1077.600M1083 39.600H1088.200M1083 43H1088.200M1083 46.200H1088.200" stroke="#fff" stroke-width="1.400"/><path d="M1057 65.800H1089.400" stroke="#7c7c7c" stroke-width="2"/><rect x="1071.200" y="62" width="4.200" height="6.200" rx="1" fill="#7c7c7c"/>
</svg>
<span class="t" style="left:1088px;top:8px;color:#000;letter-spacing:-.4px">PLC Control</span>
<!--/CENTER-->
<!--RIGHT-->
<div class="a" style="left:1690px;top:25px;width:6px;height:905px;background:#f4f6fd"></div>
<div class="a" id="right" style="left:1696px;top:0;width:217px;height:930px;background:#f0f0f0">
<div class="phead" style="left:0;width:217px"><span class="t" style="left:4px;font-size:13.600px">Picture Library</span></div>
</div>
<svg class="a" style="left:1696px;top:0" width="217" height="930" viewBox="1696 146 217 930" fill="none" font-family="Liberation Sans, sans-serif">
<path d="M1875.200 156h10.800l-5.400 5.600z" fill="#000"/><path d="M1898.200 154.200l9 8.200M1907.200 154.200l-9 8.200" stroke="#000" stroke-width="1.600"/>
<rect x="1702.500" y="177.500" width="170" height="21" rx="3" fill="#fdfdfd" stroke="#d2d2d2"/>
<path d="M1863 192.200h7l-3.500 3.400z" fill="#1a1a1a"/>
<text x="1787" y="193" font-size="13" fill="#000" text-anchor="middle">[ Project ]</text>
<rect x="1883.500" y="176.500" width="24" height="24" rx="3" fill="#fdfdfd" stroke="#cfcfcf"/>
<path d="M1888.500 183.500c0-.6.400-1 1-1h4l1.200 1.400h5.300c.6 0 1 .4 1 1v8.600h-12.500z" fill="#e8b27a"/>
<circle cx="1896.200" cy="190.200" r="3.600" fill="#d6ecff" stroke="#2f7fd6" stroke-width="1.500"/><path d="M1898.800 193l2.700 2.800" stroke="#2f7fd6" stroke-width="1.800"/>
<rect x="1702.500" y="211.500" width="205" height="21" fill="#f0f0f0" stroke="#fafafa"/>
<path d="M1701.500 991V242.500H1908" stroke="#a0a0a0"/>
<path d="M1908.500 243V991.500H1702" stroke="#fff"/>
<path d="M1885.500 243V991" stroke="#fff"/>
<rect x="1894" y="264" width="4.500" height="20.500" rx="2" fill="#8b8b8b"/>
<clipPath id="lc"><rect x="1702" y="243" width="183" height="748"/></clipPath>
<g clip-path="url(#lc)">
<rect x="1702" y="243" width="140" height="160" fill="#ffff00"/>
<rect x="1706.500" y="253.5" width="129" height="142" stroke="#cfcf9a"/>
<rect x="1707.500" y="254.5" width="127" height="140" stroke="#ffffe0"/>
<rect x="1712" y="248" width="13" height="12" fill="#ffff00"/>
<text x="1715.200" y="258" font-size="12" fill="#000">0</text>
<path d="M1711.500 393V265.5H1830" stroke="#8a8a8a"/>
<path d="M1829.500 266V392.5H1712" stroke="#fff"/>
<rect x="1720" y="279" width="100" height="100" fill="#fff"/>
<rect x="1706.500" y="413.5" width="129" height="142" stroke="#dcdcdc"/>
<rect x="1707.500" y="414.5" width="127" height="140" stroke="#fbfbfb"/>
<rect x="1712" y="408" width="13" height="12" fill="#f0f0f0"/>
<text x="1715.200" y="418" font-size="12" fill="#000">1</text>
<path d="M1711.500 553V425.5H1830" stroke="#8a8a8a"/>
<path d="M1829.500 426V552.5H1712" stroke="#fff"/>
<rect x="1720" y="439" width="100" height="100" fill="#fff"/>
<rect x="1706.500" y="573.5" width="129" height="142" stroke="#dcdcdc"/>
<rect x="1707.500" y="574.5" width="127" height="140" stroke="#fbfbfb"/>
<rect x="1712" y="568" width="13" height="12" fill="#f0f0f0"/>
<text x="1715.200" y="578" font-size="12" fill="#000">2</text>
<path d="M1711.500 713V585.5H1830" stroke="#8a8a8a"/>
<path d="M1829.500 586V712.5H1712" stroke="#fff"/>
<rect x="1720" y="599" width="100" height="100" fill="#fff"/>
<rect x="1706.500" y="733.5" width="129" height="142" stroke="#dcdcdc"/>
<rect x="1707.500" y="734.5" width="127" height="140" stroke="#fbfbfb"/>
<rect x="1712" y="728" width="13" height="12" fill="#f0f0f0"/>
<text x="1715.200" y="738" font-size="12" fill="#000">3</text>
<path d="M1711.500 873V745.5H1830" stroke="#8a8a8a"/>
<path d="M1829.500 746V872.5H1712" stroke="#fff"/>
<rect x="1720" y="759" width="100" height="100" fill="#fff"/>
<rect x="1706.500" y="893.5" width="129" height="142" stroke="#dcdcdc"/>
<rect x="1707.500" y="894.5" width="127" height="140" stroke="#fbfbfb"/>
<rect x="1712" y="888" width="13" height="12" fill="#f0f0f0"/>
<text x="1715.200" y="898" font-size="12" fill="#000">4</text>
<path d="M1711.500 1033V905.5H1830" stroke="#8a8a8a"/>
<path d="M1829.500 906V1032.5H1712" stroke="#fff"/>
<rect x="1720" y="919" width="100" height="100" fill="#fff"/>
<circle cx="1770.800" cy="329.300" r="37.600" fill="#b9b3b0"/>
<circle cx="1770" cy="328.500" r="37.700" fill="#ff7f5a"/>
<path d="M1761 316.500C1761 313 1763.500 311 1769.300 311S1777.600 313 1777.600 316.500V322C1777.600 325.500 1775.600 327.600 1773.800 329.200V332.500C1774.600 334.600 1777 336 1781 337.600 1785.500 339.400 1788 341 1788 343.600V346.200H1749V343.600C1749 341 1751.500 339.400 1756 337.600 1760 336 1763.600 334.600 1764.800 332.500V329.200C1763 327.600 1761 325.500 1761 322Z" fill="#f7f7f7"/>
<path d="M1756.500 491V492.500H1793.500" stroke="#4a90e2" stroke-width="1"/>
<text x="1793" y="492.300" font-size="8.500" font-style="italic" font-weight="700" fill="#4a90e2">S</text><text x="1798.300" y="491.600" font-size="8" font-style="italic" font-weight="700" fill="#e0443e" letter-spacing="1.200">20</text>
<rect x="1731.500" y="931" width="76" height="62" fill="#bdbdbd"/>
<rect x="1731.500" y="931" width="74.500" height="62" fill="#e9e9e9"/>
<rect x="1746.800" y="933.300" width="20" height="4.800" fill="#fafafa" stroke="#9a9a9a" stroke-width=".500"/><rect x="1781.800" y="933.300" width="20" height="4.800" fill="#f1f1f1" stroke="#cfcfcf" stroke-width=".500"/>
<text x="1734.500" y="937.400" font-size="3.800" font-weight="700" fill="#444">MIN</text><text x="1770.500" y="937.400" font-size="3.800" font-weight="700" fill="#444">MAX</text>
<rect x="1734" y="941.200" width="68" height="6.600" fill="#f5f5f5"/>
<rect x="1734" y="950.1" width="12" height="12.400" fill="#3c3434"/><rect x="1734" y="950.6" width="11" height="11.300" fill="#ededed"/>
<text x="1739.5" y="957.7" font-size="4.5" font-weight="700" fill="#555" text-anchor="middle">7</text>
<rect x="1748.1" y="950.1" width="12" height="12.400" fill="#3c3434"/><rect x="1748.1" y="950.6" width="11" height="11.300" fill="#ededed"/>
<text x="1753.6" y="957.7" font-size="4.5" font-weight="700" fill="#555" text-anchor="middle">8</text>
<rect x="1762.1" y="950.1" width="12" height="12.400" fill="#3c3434"/><rect x="1762.1" y="950.6" width="11" height="11.300" fill="#ededed"/>
<text x="1767.6" y="957.7" font-size="4.5" font-weight="700" fill="#555" text-anchor="middle">9</text>
<rect x="1776.6" y="950.1" width="12" height="12.400" fill="#3c3434"/><rect x="1776.6" y="950.6" width="11" height="11.300" fill="#ededed"/>
<text x="1782.1" y="957.7" font-size="3.2" font-weight="700" fill="#555" text-anchor="middle">Esc</text>
<rect x="1790.7" y="950.1" width="12" height="12.400" fill="#3c3434"/><rect x="1790.7" y="950.6" width="11" height="11.300" fill="#ededed"/>
<text x="1796.2" y="957.7" font-size="3.2" font-weight="700" fill="#555" text-anchor="middle">Del</text>
<rect x="1734" y="964.1" width="12" height="12.400" fill="#3c3434"/><rect x="1734" y="964.6" width="11" height="11.300" fill="#ededed"/>
<text x="1739.5" y="971.7" font-size="4.5" font-weight="700" fill="#555" text-anchor="middle">4</text>
<rect x="1748.1" y="964.1" width="12" height="12.400" fill="#3c3434"/><rect x="1748.1" y="964.6" width="11" height="11.300" fill="#ededed"/>
<text x="1753.6" y="971.7" font-size="4.5" font-weight="700" fill="#555" text-anchor="middle">5</text>
<rect x="1762.1" y="964.1" width="12" height="12.400" fill="#3c3434"/><rect x="1762.1" y="964.6" width="11" height="11.300" fill="#ededed"/>
<text x="1767.6" y="971.7" font-size="4.5" font-weight="700" fill="#555" text-anchor="middle">6</text>
<rect x="1776.6" y="964.1" width="12" height="12.400" fill="#3c3434"/><rect x="1776.6" y="964.6" width="11" height="11.300" fill="#ededed"/>
<text x="1782.1" y="971.7" font-size="3.2" font-weight="700" fill="#555" text-anchor="middle">+/-</text>
<rect x="1790.7" y="964.1" width="12" height="12.400" fill="#3c3434"/><rect x="1790.7" y="964.6" width="11" height="11.300" fill="#ededed"/>
<text x="1796.2" y="971.7" font-size="3.2" font-weight="700" fill="#555" text-anchor="middle">Clr</text>
<rect x="1734" y="978" width="12" height="12.400" fill="#3c3434"/><rect x="1734" y="978.5" width="11" height="11.300" fill="#ededed"/>
<text x="1739.5" y="985.6" font-size="4.5" font-weight="700" fill="#555" text-anchor="middle">1</text>
<rect x="1748.1" y="978" width="12" height="12.400" fill="#3c3434"/><rect x="1748.1" y="978.5" width="11" height="11.300" fill="#ededed"/>
<text x="1753.6" y="985.6" font-size="4.5" font-weight="700" fill="#555" text-anchor="middle">2</text>
<rect x="1762.1" y="978" width="12" height="12.400" fill="#3c3434"/><rect x="1762.1" y="978.5" width="11" height="11.300" fill="#ededed"/>
<text x="1767.6" y="985.6" font-size="4.5" font-weight="700" fill="#555" text-anchor="middle">3</text>
<rect x="1776.6" y="978" width="12" height="12.400" fill="#3c3434"/><rect x="1776.6" y="978.5" width="11" height="11.300" fill="#ededed"/>
<text x="1782.1" y="985.6" font-size="4.5" font-weight="700" fill="#555" text-anchor="middle">0</text>
<rect x="1790.7" y="978" width="12" height="12.400" fill="#3c3434"/><rect x="1790.7" y="978.5" width="11" height="11.300" fill="#ededed"/>
<text x="1796.2" y="985.6" font-size="4.5" font-weight="700" fill="#555" text-anchor="middle">.</text>
</g>
<rect x="1708.500" y="1006.500" width="193" height="4" fill="#e7eaea" stroke="#d6d6d6"/>
<rect x="1893" y="1000" width="8" height="17" fill="#0078d7"/>
<path d="M1701 1028.500H1912" stroke="#7a7a7a"/>
<rect x="1703.500" y="1039.500" width="206" height="25" rx="3" fill="#fdfdfd" stroke="#d0d0d0"/>
<text x="1806" y="1058" font-size="13" fill="#000" text-anchor="middle">Remove Picture</text>
</svg>
<!--/RIGHT-->
</div>
<!--STATUS-->
<div class="a" id="status">
<span class="t" style="left:0">cMT3162X (1920 x 1080)</span>
<i class="vs" style="left:166px"></i><i class="vs" style="left:381px"></i>
<i class="vs" style="left:1158px"></i><i class="vs" style="left:1268px"></i><i class="vs" style="left:1378px"></i>
<i class="vs" style="left:1463px"></i><i class="vs" style="left:1548px"></i><i class="vs" style="left:1579px"></i>
<i class="vs" style="left:1621px"></i><i class="vs" style="left:1670px"></i><i class="vs" style="left:1718px"></i>
<span class="t" style="left:1387px">X = 942</span>
<span class="t" style="left:1472px">Y = -153</span>
<span class="t" style="left:1588px;color:#a3a3a3;letter-spacing:-.6px">CAP</span>
<span class="t" style="left:1630px;letter-spacing:.8px">NUM</span>
<span class="t" style="left:1678px;color:#a3a3a3;letter-spacing:-.9px">SCRL</span>
<span class="t" style="left:1727px">60 %</span>
<svg class="a" style="left:1555px;top:0" width="358" height="29" viewBox="1555 1076 358 29" fill="none">
 <path d="M1559 1084h12v12h-12z M1561.500 1085.200h7v3.600h-7z M1561.500 1091h7v3.800h-2.400v-1.600h-2v1.600h-2.600z" fill="#4a90e2" fill-rule="evenodd"/>
 <path d="M1763 1091h6.500" stroke="#9a9a9a" stroke-width="1.200"/>
 <path d="M1877.800 1091h7.200M1881.400 1087.400v7.200" stroke="#9a9a9a" stroke-width="1.200"/>
 <rect x="1774.500" y="1091" width="99" height="3.400" fill="#e7eaea" stroke="#d9d9d9" stroke-width=".800"/>
 <path d="M1780.500 1078.500v4M1788.500 1078.500v4M1796.500 1078.500v4M1804.500 1078.500v4M1812.500 1078.500v4M1820.500 1078.500v4M1828.500 1078.500v4M1836.500 1078.500v4M1844.500 1078.500v4M1852.500 1078.500v4M1860.500 1078.500v4M1868.500 1078.500v4" stroke="#e0e0e0"/>
 <path d="M1783 1088.200l5.600-5.600 5.600 5.600v13.600h-11.200z" fill="#0078d7"/>
 <g stroke="#8c8c8c" stroke-width="1.300"><path d="M1894 1086.500v-3h3M1905.500 1083.500h3v3M1908.500 1095v3h-3M1897 1098h-3v-3"/></g>
 <path d="M1901.200 1084.500v12.500M1895 1090.800h12.500" stroke="#4a90e2" stroke-width="1.200"/>
 <path d="M1901.200 1083.200l-2 2.400h4zM1901.200 1098.300l-2-2.400h4zM1893.800 1090.800l2.400-2v4zM1908.700 1090.800l-2.400-2v4z" fill="#4a90e2"/>
 <circle cx="1901.200" cy="1090.800" r="1.400" fill="#f0883a"/>
</svg>
</div>
<!--/STATUS-->
</body>
</html>
